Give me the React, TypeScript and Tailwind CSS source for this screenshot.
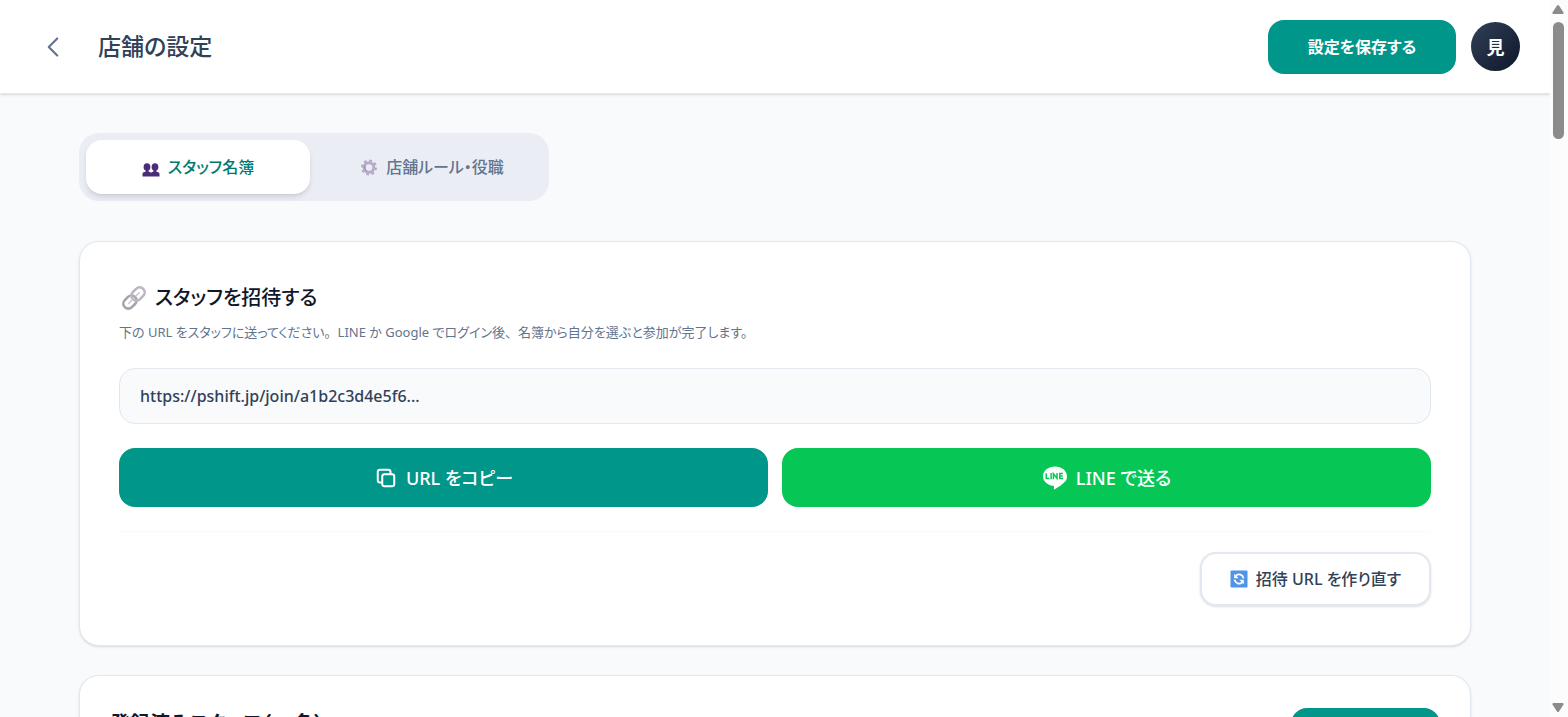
import { ChevronLeft } from 'lucide-react'

function CopyIcon() {
  return (
    <svg viewBox="0 0 24 24" className="h-6 w-6" fill="none" stroke="currentColor" strokeWidth="2" strokeLinejoin="round" aria-hidden="true">
      <path d="M16.5 8.25V6a2.25 2.25 0 0 0-2.25-2.25H6A2.25 2.25 0 0 0 3.75 6v8.25A2.25 2.25 0 0 0 6 16.5h2.25" />
      <rect x="8.25" y="8.25" width="12" height="12" rx="2.25" />
    </svg>
  )
}

function UsersIcon() {
  return (
    <svg viewBox="0 -3 18 18" className="h-[18px] w-[18px] overflow-visible" fill="#4b2c7a" aria-hidden="true">
      <ellipse cx="5" cy="6" rx="3.4" ry="3.8" />
      <ellipse cx="13" cy="6" rx="3.4" ry="3.8" />
      <path d="M.5 15.5v-2.600c0-1.600 1.600-2 3.200-2.500V9h2.800v1.400c1 .3 1.900.7 2.500 1.300.6-.6 1.500-1 2.500-1.300V9h2.800v1.400c1.600.5 3.200.9 3.200 2.500v2.600z" />
    </svg>
  )
}

function GearIcon() {
  return (
    <svg viewBox="0 -1 18 18" className="h-[18px] w-[18px]" fill="none" aria-hidden="true">
      <circle cx="9" cy="8.5" r="7" stroke="#b5a6c6" strokeWidth="2" strokeDasharray="2.75 2.75" />
      <circle cx="9" cy="8.5" r="4.8" stroke="#b8aacb" strokeWidth="3" />
      <path d="M6.400 11.800a4.200 4.200 0 0 1-1.400-5.100" stroke="#9580b0" strokeWidth="1" />
    </svg>
  )
}

function LinkIcon() {
  return (
    <svg viewBox="-3 -2 28 28" className="h-7 w-7" fill="none" aria-hidden="true">
      <g transform="rotate(-45 12 12)">
        <rect x="-1" y="7" width="14.500" height="10" rx="5" stroke="#aaa1b0" strokeWidth="2.600" />
        <rect x="10.500" y="7" width="14.500" height="10" rx="5" stroke="#bcb5c2" strokeWidth="2.600" />
        <path d="M4 12h6.500M14 12h6" stroke="#cfc7d3" strokeWidth="1.500" />
      </g>
    </svg>
  )
}

function LineIcon() {
  return (
    <svg viewBox="0 0 26 26" className="h-[26px] w-[26px]" aria-hidden="true">
      <path
        d="M13 1.500C6.300 1.500 1 5.800 1 11.200c0 4.800 4.300 8.800 10.100 9.600.9.200 1 .6.900 1.400l-.2 1.500c-.1.700.3 1 1 .6 3.500-1.900 8-5 10.300-7.700 1.300-1.500 1.900-3.400 1.900-5.400 0-5.400-5.300-9.700-12-9.700z"
        fill="#fff"
      />
      <path
        d="M4.300 8.300v5.300h3M9.100 8v6.200M11.400 14.200V8.800l3.600 4.600V8M21 8.600h-3.200v5H21M17.800 11.100h2.900"
        stroke="#06c755"
        strokeWidth="1.500"
        fill="none"
      />
    </svg>
  )
}

function RefreshIcon() {
  return (
    <svg viewBox="0 0 18 18" className="h-[18px] w-[18px]" fill="none" aria-hidden="true">
      <rect x="0.500" y="0.500" width="17" height="17" rx="1" fill="#4f94e6" />
      <path d="M13.500 8.300A4.600 4.600 0 0 0 5.800 5.700M4.500 9.700a4.600 4.600 0 0 0 7.700 2.600" stroke="#fff" strokeWidth="1.800" />
      <path d="M4.200 3.800v4.500h4.500zM13.800 14.200V9.700H9.300z" fill="#fff" />
    </svg>
  )
}

function Scrollbar() {
  return (
    <div className="flex w-[18px] shrink-0 flex-col items-center justify-between bg-[#fcfcfc] py-1 pr-0.5" aria-hidden="true">
      <div className="flex flex-col items-center gap-2">
        <svg viewBox="0 0 12 10" className="h-[10px] w-3" fill="#8b8b8b">
          <path d="M5 1.500q1-1 2 0l4.500 7q.5 1.500-1 1.500h-9Q0 10 .5 8.500z" />
        </svg>
        <div className="h-[117px] w-[11px] rounded-full bg-[#8b8b8b]" />
      </div>
      <svg viewBox="0 0 12 10" className="h-[10px] w-3" fill="#8b8b8b">
        <path d="M5 8.500q1 1 2 0l4.500-7Q12 0 10.500 0h-9Q0 0 .5 1.500z" />
      </svg>
    </div>
  )
}

function Header() {
  return (
    <header className="flex h-[94px] shrink-0 items-center justify-between border-b border-slate-200 bg-white pr-[30px] pl-9 shadow-sm">
      <div className="flex items-center gap-7">
        <button type="button" aria-label="戻る" className="text-slate-500">
          <ChevronLeft size={34} strokeWidth={1.5} />
        </button>
        <h1 className="text-[23px] font-medium text-slate-700">店舗の設定</h1>
      </div>
      <div className="flex items-center gap-[15px]">
        <button type="button" className="h-[54px] w-[188px] rounded-2xl bg-[#009689] text-base font-bold text-white">
          設定を保存する
        </button>
        <button
          type="button"
          className="h-[49px] w-[49px] rounded-full bg-linear-to-br from-slate-700 to-slate-900 text-lg font-bold text-white"
        >
          見
        </button>
      </div>
    </header>
  )
}

function Tabs() {
  return (
    <div className="flex w-fit gap-2 rounded-[20px] bg-[#ebedf5] p-[7px]">
      <button
        type="button"
        className="flex h-[54px] w-[224px] items-center justify-center gap-2 rounded-2xl bg-white text-base font-medium text-teal-700 shadow-md"
      >
        <UsersIcon />
        スタッフ名簿
      </button>
      <button
        type="button"
        className="flex h-[54px] w-[224px] items-center justify-center gap-2 rounded-2xl pl-1 text-base font-medium text-slate-500"
      >
        <GearIcon />
        店舗ルール・役職
      </button>
    </div>
  )
}

function InviteCard() {
  return (
    <section className="rounded-[20px] border border-slate-200 bg-white px-[39px] pt-10 pb-[39px] shadow-sm">
      <h2 className="flex h-8 items-center gap-2 text-xl font-medium text-slate-900">
        <LinkIcon />
        スタッフを招待する
      </h2>
      <p className="mt-2 text-[13px] leading-5 text-slate-500">
        下の URL をスタッフに送ってください<span className="[font-feature-settings:normal]">。</span>LINE か Google
        でログイン後<span className="[font-feature-settings:normal]">、</span>名簿から自分を選ぶと参加が完了します。
      </p>
      <input
        readOnly
        aria-label="招待 URL"
        value="https://pshift.jp/join/a1b2c3d4e5f6..."
        className="mt-[26px] h-14 w-full rounded-2xl border border-slate-200 bg-slate-50 px-5 text-base font-medium text-slate-700 outline-none"
      />
      <div className="mt-6 grid grid-cols-2 gap-[14px]">
        <button
          type="button"
          className="flex h-[59px] items-center justify-center gap-2 rounded-2xl bg-[#009689] text-lg font-medium text-white"
        >
          <CopyIcon />
          URL をコピー
        </button>
        <button
          type="button"
          className="flex h-[59px] items-center justify-center gap-2 rounded-2xl bg-[#06c755] text-lg font-medium text-white"
        >
          <LineIcon />
          LINE で送る
        </button>
      </div>
      <div className="mt-6 flex justify-end border-t border-slate-50 pt-5">
        <button
          type="button"
          className="flex h-[54px] w-[231px] items-center justify-center gap-2 rounded-2xl border-2 border-slate-200 bg-white text-base font-medium text-slate-700 shadow-sm"
        >
          <RefreshIcon />
          招待 URL を作り直す
        </button>
      </div>
    </section>
  )
}

function StaffCard() {
  return (
    <section className="flex items-start justify-between rounded-[20px] border border-slate-200 bg-white px-[30px] py-8 shadow-sm">
      <h2 className="text-xl leading-8 font-bold text-slate-900">登録済みスタッフ（12名）</h2>
      <button type="button" className="h-[54px] w-[149px] rounded-2xl bg-[#009689] text-base font-bold text-white">
        スタッフ追加
      </button>
    </section>
  )
}

export default function App() {
  return (
    <div className="flex h-screen overflow-hidden bg-slate-50 font-['Noto_Sans','Noto_Sans_CJK_JP',sans-serif] [font-feature-settings:'palt']">
      <div className="flex min-w-0 flex-1 flex-col">
        <Header />
        <main className="flex min-h-0 flex-1 flex-col overflow-hidden px-[79px] pt-[39px]">
          <Tabs />
          <div className="mt-10 flex flex-col gap-[29px]">
            <InviteCard />
            <StaffCard />
          </div>
        </main>
      </div>
      <Scrollbar />
    </div>
  )
}
